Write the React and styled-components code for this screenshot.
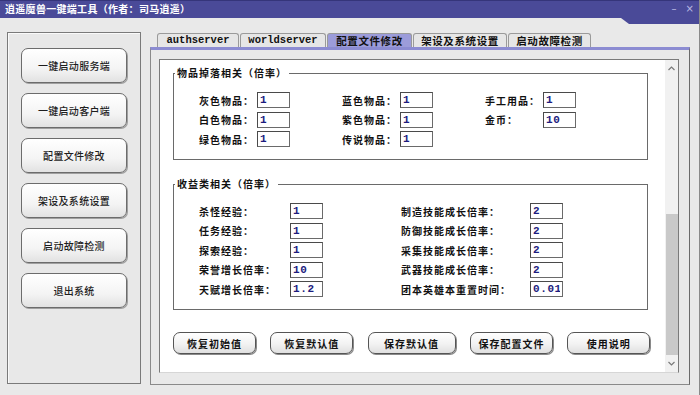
import React from "react";
import styled, { createGlobalStyle } from "styled-components";

const GlobalStyle = createGlobalStyle`
  html, body {
    margin: 0;
    padding: 0;
    background: #e9e9e9;
  }
  body {
    font-family: "Noto Sans CJK SC", "Liberation Sans", sans-serif;
  }
`;

const cjk = `"Noto Sans CJK SC", "Liberation Sans", sans-serif`;
const mono = `"Liberation Mono", "Noto Sans CJK SC", monospace`;

const Window = styled.div`
  width: 700px;
  height: 395px;
  box-sizing: border-box;
  background: #e9e9e9;
  border-right: 1px solid #8a8a8a;
  display: flex;
  flex-direction: column;
  overflow: hidden;
`;

const TitleBar = styled.div`
  height: 18px;
  flex-shrink: 0;
  background: #4a4a98;
  border-top: 1px solid #35357a;
  box-sizing: border-box;
  display: flex;
  align-items: flex-start;
`;

const Title = styled.div`
  flex: 1;
  color: #fff;
  font-family: ${cjk};
  font-size: 10px;
  font-weight: 700;
  line-height: 16px;
  padding-left: 5px;
  letter-spacing: 0.3px;
`;

const TitleTab = styled.div`
  position: relative;
  z-index: 2;
  width: 78px;
  height: 23px;
  background: #4a4a98;
  clip-path: polygon(0 0, 100% 0, 100% 100%, 8px 100%, 0 17px);
  display: flex;
  justify-content: flex-end;
  align-items: flex-start;
  gap: 9px;
  padding-right: 5px;
  box-sizing: border-box;
`;

const WinControl = styled.span`
  color: #b9b9e2;
  font-family: "DejaVu Sans", sans-serif;
  font-size: 10px;
  line-height: 15px;
`;

const Body = styled.div`
  flex: 1;
  display: flex;
  gap: 9px;
  padding: 14px 0 0 7px;
`;

const SidePanel = styled.div`
  width: 134px;
  height: 352px;
  box-sizing: border-box;
  border: 1px solid #7a7a7a;
  box-shadow: inset 1px 1px 0 #fafafa;
  background: #e8e8e8;
  display: flex;
  flex-direction: column;
  align-items: center;
  gap: 10px;
  padding-top: 15px;
`;

const SideButton = styled.button`
  width: 106px;
  height: 35px;
  box-sizing: border-box;
  border: 1px solid #6c6c6c;
  border-radius: 7px;
  background: linear-gradient(#ffffff, #f4f4f4 60%, #e2e2e2);
  box-shadow: 1px 1px 0 #a0a0a0;
  font-family: ${cjk};
  font-size: 10px;
  font-weight: 500;
  color: #1e1e1e;
  letter-spacing: 0.3px;
  padding: 0;
`;

const RightColumn = styled.div`
  width: 540px;
  display: flex;
  flex-direction: column;
`;

const TabStrip = styled.div`
  display: flex;
  gap: 1px;
  height: 14px;
  margin: 1px 0 0 7px;
`;

const Tab = styled.div`
  width: ${(p) => p.w}px;
  height: 14px;
  box-sizing: border-box;
  border: 1px solid #9a9a9a;
  border-bottom: none;
  border-radius: 3px 3px 0 0;
  background: ${(p) => (p.active ? "#9c9cda" : "#e6e6e6")};
  font-family: ${(p) => (p.ascii ? mono : cjk)};
  font-size: ${(p) => (p.ascii ? "10.5px" : "10.5px")};
  font-weight: 700;
  letter-spacing: ${(p) => (p.ascii ? "0" : "0.6px")};
  color: #111;
  line-height: 13px;
  text-align: center;
`;

const Panel = styled.div`
  height: 338px;
  box-sizing: border-box;
  border-top: 3px solid #8c8cd2;
  border-left: 1px solid #8a8a8a;
  border-right: 1px solid #6a6a6a;
  border-bottom: 1px solid #8a8a8a;
  padding: 9px 0 0 8px;
`;

const Frame = styled.div`
  width: 520px;
  height: 314px;
  box-sizing: border-box;
  border: 1px solid #7a7a7a;
  border-bottom-color: #d6d6d6;
  background: #fff;
  display: flex;
`;

const Content = styled.div`
  flex: 1;
  padding: 6px 0 0 13px;
`;

const GroupBox = styled.fieldset`
  width: 475px;
  box-sizing: border-box;
  margin: ${(p) => p.mt || 0}px 0 0 0;
  padding: 12px 0 12px 1px;
  border: 1px solid #6a6a6a;
  min-width: 0;
`;

const Legend = styled.legend`
  padding: 0 2px;
  font-family: ${cjk};
  font-size: 10px;
  font-weight: 700;
  letter-spacing: 1px;
  line-height: 14px;
  color: #111;
`;

const FieldGrid = styled.div`
  display: grid;
  grid-template-columns: ${(p) => p.cols};
  row-gap: ${(p) => p.gap}px;
  margin-left: 24px;
`;

const Field = styled.div`
  display: flex;
  align-items: center;
  height: 16px;
`;

const Label = styled.span`
  width: ${(p) => p.w}px;
  flex-shrink: 0;
  font-family: ${cjk};
  font-size: 10px;
  font-weight: 700;
  letter-spacing: 1px;
  color: #111;
  white-space: nowrap;
`;

const ValueInput = styled.input`
  width: 33px;
  height: 16px;
  box-sizing: border-box;
  border: 1px solid #4a4a4a;
  border-right-color: #6a6a6a;
  border-bottom-color: #6a6a6a;
  padding: 0 2px;
  margin: 0;
  font-family: ${mono};
  font-size: 11px;
  font-weight: 700;
  letter-spacing: 0.6px;
  color: #1c1c7e;
  background: #fff;
  outline: none;
`;

const ActionRow = styled.div`
  display: flex;
  gap: 14.3px;
  margin-top: 22px;
`;

const ActionButton = styled.button`
  width: ${(p) => p.w}px;
  height: 22px;
  box-sizing: border-box;
  border: 1px solid #555;
  border-radius: 7px;
  background: linear-gradient(#ffffff, #f2f2f2 55%, #e0e0e0);
  box-shadow: 1px 1px 0 #8a8a8a;
  font-family: ${cjk};
  font-size: 10px;
  font-weight: 700;
  letter-spacing: 1px;
  color: #111;
  padding: 0;
`;

const ScrollBar = styled.div`
  width: 13px;
  background: #f1f1f1;
  display: flex;
  flex-direction: column;
  align-items: center;
`;

const ScrollArrow = styled.div`
  height: ${(p) => p.h}px;
  display: flex;
  align-items: center;
  justify-content: center;
`;

const ScrollSpacer = styled.div`
  flex: 1;
`;

const ScrollThumb = styled.div`
  width: 12px;
  height: 141px;
  background: #c9c9c9;
`;

const tabs = [
  { text: "authserver", w: 82, ascii: true },
  { text: "worldserver", w: 86, ascii: true },
  { text: "配置文件修改", w: 85, active: true },
  { text: "架设及系统设置", w: 94 },
  { text: "启动故障检测", w: 83 },
];

const sideButtons = [
  "一键启动服务端",
  "一键启动客户端",
  "配置文件修改",
  "架设及系统设置",
  "启动故障检测",
  "退出系统",
];

const dropRows = [
  [
    ["灰色物品：", "1"],
    ["蓝色物品：", "1"],
    ["手工用品：", "1"],
  ],
  [
    ["白色物品：", "1"],
    ["紫色物品：", "1"],
    ["金币：", "10"],
  ],
  [
    ["绿色物品：", "1"],
    ["传说物品：", "1"],
    null,
  ],
];

const gainRows = [
  [["杀怪经验：", "1"], ["制造技能成长倍率：", "2"]],
  [["任务经验：", "1"], ["防御技能成长倍率：", "2"]],
  [["探索经验：", "1"], ["采集技能成长倍率：", "2"]],
  [["荣誉增长倍率：", "10"], ["武器技能成长倍率：", "2"]],
  [["天赋增长倍率：", "1.2"], ["团本英雄本重置时间：", "0.01"]],
];

const actions = [
  { text: "恢复初始值", w: 83 },
  { text: "恢复默认值", w: 83 },
  { text: "保存默认值", w: 88 },
  { text: "保存配置文件", w: 83 },
  { text: "使用说明", w: 83 },
];

function Chevron({ up }) {
  return (
    <svg width="7" height="5" viewBox="0 0 7 5">
      <polyline
        points={up ? "0.5,4 3.5,1 6.5,4" : "0.5,1 3.5,4 6.5,1"}
        fill="none"
        stroke="#7a7a7a"
        strokeWidth="1.2"
      />
    </svg>
  );
}

function App() {
  return (
    <>
      <GlobalStyle />
      <Window>
        <TitleBar>
          <Title>逍遥魔兽一键端工具（作者：司马逍遥）</Title>
          <TitleTab>
            <WinControl>–</WinControl>
            <WinControl>×</WinControl>
          </TitleTab>
        </TitleBar>
        <Body>
          <SidePanel>
            {sideButtons.map((b) => (
              <SideButton key={b}>{b}</SideButton>
            ))}
          </SidePanel>
          <RightColumn>
            <TabStrip>
              {tabs.map((t) => (
                <Tab key={t.text} w={t.w} active={t.active} ascii={t.ascii}>
                  {t.text}
                </Tab>
              ))}
            </TabStrip>
            <Panel>
              <Frame>
                <Content>
                  <GroupBox>
                    <Legend>物品掉落相关（倍率）</Legend>
                    <FieldGrid cols="repeat(3, 143px)" gap={3.5}>
                      {dropRows.flat().map((f, i) =>
                        f ? (
                          <Field key={i}>
                            <Label w={58}>{f[0]}</Label>
                            <ValueInput defaultValue={f[1]} />
                          </Field>
                        ) : (
                          <Field key={i} />
                        )
                      )}
                    </FieldGrid>
                  </GroupBox>
                  <GroupBox mt={17}>
                    <Legend>收益类相关（倍率）</Legend>
                    <FieldGrid cols="202px auto" gap={3.6}>
                      {gainRows.map((row, i) =>
                        row.map((f, j) => (
                          <Field key={i + "-" + j}>
                            <Label w={j === 0 ? 91 : 129}>{f[0]}</Label>
                            <ValueInput defaultValue={f[1]} />
                          </Field>
                        ))
                      )}
                    </FieldGrid>
                  </GroupBox>
                  <ActionRow>
                    {actions.map((a) => (
                      <ActionButton key={a.text} w={a.w}>
                        {a.text}
                      </ActionButton>
                    ))}
                  </ActionRow>
                </Content>
                <ScrollBar>
                  <ScrollArrow h={16}>
                    <Chevron up />
                  </ScrollArrow>
                  <ScrollSpacer />
                  <ScrollThumb />
                  <ScrollArrow h={17}>
                    <Chevron />
                  </ScrollArrow>
                </ScrollBar>
              </Frame>
            </Panel>
          </RightColumn>
        </Body>
      </Window>
    </>
  );
}

export default App;
